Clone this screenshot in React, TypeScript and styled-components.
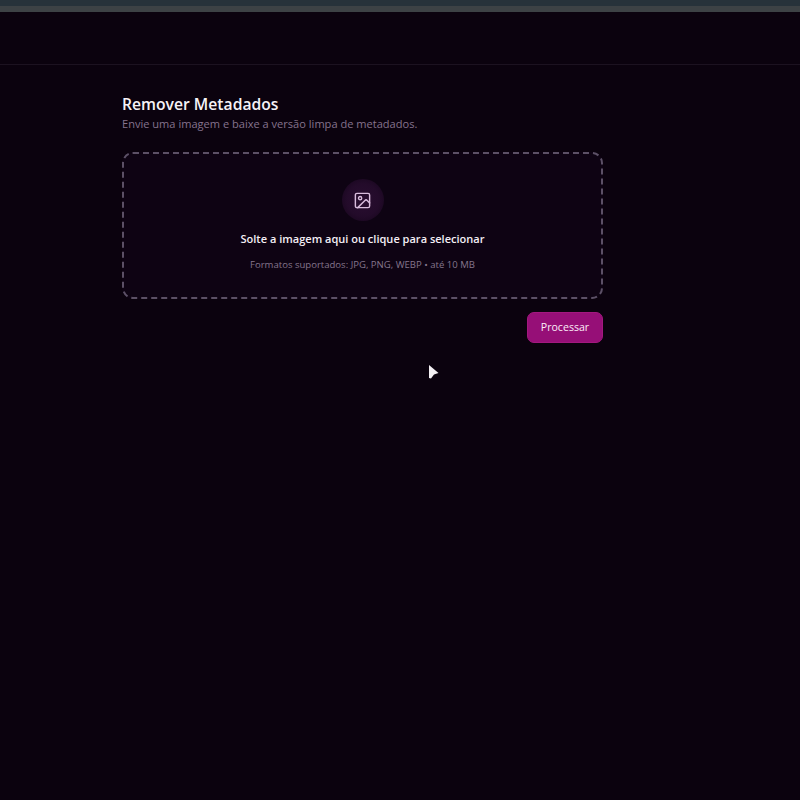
import React from "react";
import styled, { createGlobalStyle } from "styled-components";
import { ImageIcon } from "lucide-react";

const GlobalStyle = createGlobalStyle`
  html, body {
    margin: 0;
    padding: 0;
    background: #0b020e;
  }
  * {
    box-sizing: border-box;
  }
`;

function App() {
  return (
    <>
      <GlobalStyle />
      <Page>
        <TabStrip />
        <TabEdge />
        <Header />
        <Main>
          <Title>Remover Metadados</Title>
          <Subtitle>Envie uma imagem e baixe a versão limpa de metadados.</Subtitle>
          <DropZone>
            {/* css dashed border has too short dashes */}
            <DashFrame>
              <DashRect x="1" y="1" rx="10" ry="10" />
            </DashFrame>
            <IconCircle>
              <ImageIcon size={19} strokeWidth={1.8} />
            </IconCircle>
            <DropText>Solte a imagem aqui ou clique para selecionar</DropText>
            <DropHint>Formatos suportados: JPG, PNG, WEBP • até 10 MB</DropHint>
          </DropZone>
          <Actions>
            <ProcessButton>Processar</ProcessButton>
          </Actions>
        </Main>
        <Cursor viewBox="0 0 12 16">
          <path d="M1 1 L10.5 9 L6 10.5 L3 14.5 L1 14 Z" fill="#f4f0f4" />
        </Cursor>
      </Page>
    </>
  );
}

export default App;

const Page = styled.div`
  position: relative;
  width: 800px;
  height: 800px;
  overflow: hidden;
  background: #0b020e;
  font-family: "Open Sans", "Noto Sans", sans-serif;
`;

const TabStrip = styled.div`
  height: 6px;
  background: #27323a;
`;

const TabEdge = styled.div`
  height: 6px;
  background: #3d4245;
`;

const Header = styled.div`
  height: 53px;
  border-bottom: 1px solid #1c1220;
`;

const Main = styled.main`
  width: 481px;
  margin-left: 122px;
  padding-top: 28px;
`;

const Title = styled.h1`
  margin: 0;
  height: 22px;
  font-size: 15.7px;
  line-height: 22px;
  font-weight: 600;
  color: #f6f2f7;
`;

const Subtitle = styled.p`
  margin: 0;
  height: 17px;
  font-size: 11.07px;
  line-height: 17px;
  color: #85738d;
`;

const DropZone = styled.div`
  position: relative;
  height: 147px;
  margin-top: 20px;
  padding-top: 28px;
  display: flex;
  flex-direction: column;
  align-items: center;
  border-radius: 11px;
  background: #0e0313;
`;

const DashFrame = styled.svg`
  position: absolute;
  inset: 0;
  width: 100%;
  height: 100%;
`;

const DashRect = styled.rect`
  width: calc(100% - 2px);
  height: calc(100% - 2px);
  fill: none;
  stroke: #5c5066;
  stroke-width: 2;
  stroke-dasharray: 6 4;
`;

const IconCircle = styled.div`
  width: 42px;
  height: 42px;
  margin-top: -1px;
  display: flex;
  align-items: center;
  justify-content: center;
  border-radius: 50%;
  background: radial-gradient(circle, #290e30 0%, #230b2a 55%, #18061e 85%, #0e0313 100%);
  color: #d8bcdc;
`;

const DropText = styled.div`
  margin-top: 9px;
  font-size: 11.04px;
  line-height: 17px;
  font-weight: 600;
  color: #f4eff5;
`;

const DropHint = styled.div`
  margin-top: 11px;
  font-size: 9.55px;
  line-height: 14px;
  color: #85768d;
`;

const Actions = styled.div`
  margin-top: 13px;
  display: flex;
  justify-content: flex-end;
`;

const ProcessButton = styled.button`
  width: 76px;
  height: 31px;
  padding: 0 0 1px;
  border: 1px solid #a3187f;
  border-radius: 7px;
  background: #960f77;
  color: #fbeef7;
  font-family: inherit;
  font-size: 10.6px;
`;

const Cursor = styled.svg`
  position: absolute;
  left: 428px;
  top: 364px;
  width: 12px;
  height: 16px;
`;
